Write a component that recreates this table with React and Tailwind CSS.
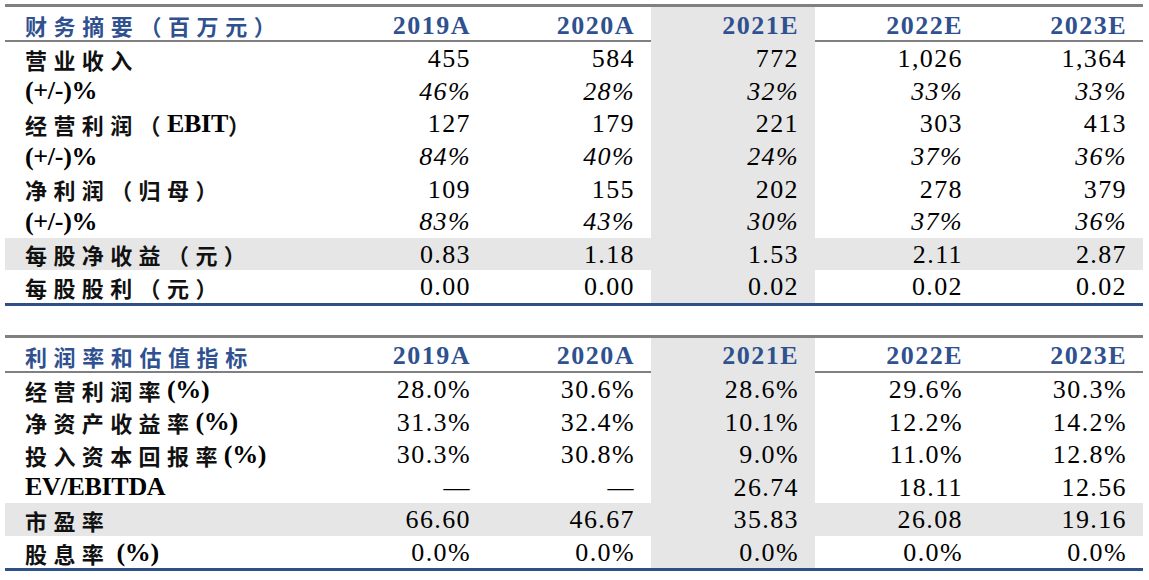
import React from 'react';

const COLS = ['2019A', '2020A', '2021E', '2022E', '2023E'];

const t1 = [
  { label: [['营业收入', 'cn']], vals: ['455', '584', '772', '1,026', '1,364'] },
  { label: [['(+/-)%', 'en']], vals: ['46%', '28%', '32%', '33%', '33%'], italic: true },
  { label: [['经营利润（', 'cn'], ['EBIT', 'en'], ['）', 'cn']], vals: ['127', '179', '221', '303', '413'] },
  { label: [['(+/-)%', 'en']], vals: ['84%', '40%', '24%', '37%', '36%'], italic: true },
  { label: [['净利润（归母）', 'cn']], vals: ['109', '155', '202', '278', '379'] },
  { label: [['(+/-)%', 'en']], vals: ['83%', '43%', '30%', '37%', '36%'], italic: true },
  { label: [['每股净收益（元）', 'cn']], vals: ['0.83', '1.18', '1.53', '2.11', '2.87'], gray: true },
  { label: [['每股股利（元）', 'cn']], vals: ['0.00', '0.00', '0.02', '0.02', '0.02'] },
];

const t2 = [
  { label: [['经营利润率', 'cn'], ['(%)', 'en']], vals: ['28.0%', '30.6%', '28.6%', '29.6%', '30.3%'] },
  { label: [['净资产收益率', 'cn'], ['(%)', 'en']], vals: ['31.3%', '32.4%', '10.1%', '12.2%', '14.2%'] },
  { label: [['投入资本回报率', 'cn'], ['(%)', 'en']], vals: ['30.3%', '30.8%', '9.0%', '11.0%', '12.8%'] },
  { label: [['EV/EBITDA', 'en']], vals: ['—', '—', '26.74', '18.11', '12.56'] },
  { label: [['市盈率', 'cn']], vals: ['66.60', '46.67', '35.83', '26.08', '19.16'], gray: true },
  { label: [['股息率', 'cn'], [' (%)', 'en']], vals: ['0.0%', '0.0%', '0.0%', '0.0%', '0.0%'] },
];

function Label({ parts }) {
  return (
    <div className="flex items-center pl-[20px] pt-[1px] whitespace-pre leading-none overflow-hidden">
      {parts.map(([txt, kind], i) =>
        kind === 'cn' ? (
          <span key={i} className="text-[22px] tracking-[6.4px] font-bold text-[#111] [font-family:'Noto_Sans_CJK_SC',sans-serif]">
            {txt}
          </span>
        ) : (
          <span key={i} className="text-[26px] font-bold tracking-[-0.3px] text-black [font-family:'Liberation_Serif',serif]">
            {txt}
          </span>
        )
      )}
    </div>
  );
}

function Table({ title, rows }) {
  return (
    <div className="w-[1138px] border-t-[3px] border-b-[3px] border-t-[#808080] border-b-[#2f4f87] leading-none">
      <div className="grid grid-cols-[318px_repeat(5,164px)] grid-rows-[35px] h-[35px] border-b-[2.5px] border-[#808080]">
        <div className="flex items-center pl-[20px] pt-[1px] overflow-hidden">
          <span className="text-[22px] tracking-[6.6px] font-bold text-[#2f5190] [font-family:'Noto_Sans_CJK_SC',sans-serif]">{title}</span>
        </div>
        {COLS.map((c, i) => (
          <div key={c} className={`flex items-center justify-end pr-[16px] pt-[2px] overflow-hidden ${i === 2 ? 'bg-[#e6e6e6]' : ''}`}>
            <span className="text-[26px] font-bold tracking-[1.5px] text-[#2f5190] [font-family:'Liberation_Serif',serif]">{c}</span>
          </div>
        ))}
      </div>
      {rows.map((r, ri) => (
        <div key={ri} className={`grid grid-cols-[318px_repeat(5,164px)] grid-rows-[32.6px] h-[32.6px] ${r.gray ? 'bg-[#e6e6e6]' : ''}`}>
          <Label parts={r.label} />
          {r.vals.map((v, i) => (
            <div key={i} className={`flex items-center justify-end pr-[16px] pt-[2px] overflow-hidden ${i === 2 ? 'bg-[#e6e6e6]' : ''}`}>
              <span className={`text-[26px] tracking-[1.4px] text-black [font-family:'Liberation_Serif',serif] ${r.italic ? 'italic' : ''}`}>{v}</span>
            </div>
          ))}
        </div>
      ))}
    </div>
  );
}

export default function App() {
  return (
    <div className="w-[1149px] h-[580px] bg-white pl-[5px] pt-[4px] flex flex-col gap-[29px] overflow-hidden">
      <Table title="财务摘要（百万元）" rows={t1} />
      <Table title="利润率和估值指标" rows={t2} />
    </div>
  );
}
